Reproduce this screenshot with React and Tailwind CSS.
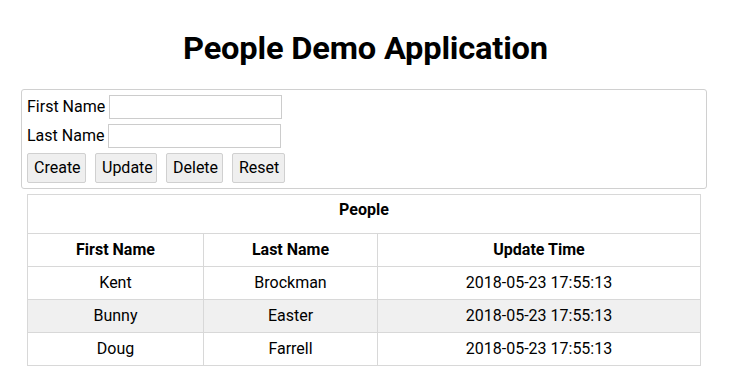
import React from 'react';

const people = [
  { first: 'Kent', last: 'Brockman', time: '2018-05-23 17:55:13' },
  { first: 'Bunny', last: 'Easter', time: '2018-05-23 17:55:13' },
  { first: 'Doug', last: 'Farrell', time: '2018-05-23 17:55:13' },
];

const Button = ({ children, className = '' }) => (
  <button
    className={`h-[30px] px-[6px] bg-[#efefef] border border-[#d0d0d0] rounded-[2px] text-[16px] text-black ${className}`}
  >
    {children}
  </button>
);

const App = () => (
  <div className="min-h-screen bg-white text-black" style={{ fontFamily: 'Roboto, "Liberation Sans", sans-serif' }}>
    <h1 className="pt-[28px] h-[89px] text-center text-[32px] font-bold leading-[40px] tracking-[-0.2px] scale-x-[1.02]">
      People Demo Application
    </h1>

    <div className="ml-[21px] w-[686px] h-[100px] border border-[#d0d0d0] rounded-[3px] px-[5px] pt-[5px] text-[16px]">
      <div className="flex items-center h-[24px]">
        <span className="mr-[4px]">First Name</span>
        <input className="w-[173px] h-[24px] border border-[#cccccc] outline-none" />
      </div>
      <div className="flex items-center h-[24px] mt-[5px]">
        <span className="mr-[4px]">Last Name</span>
        <input className="w-[173px] h-[24px] border border-[#cccccc] outline-none" />
      </div>
      <div className="flex items-center gap-[9px] mt-[5px]">
        <Button className="w-[59px]">Create</Button>
        <Button className="w-[62px]">Update</Button>
        <Button className="w-[57px]">Delete</Button>
        <Button className="w-[53px]">Reset</Button>
      </div>
    </div>

    <table className="ml-[27px] mt-[5px] w-[674px] border-collapse text-[16px]">
      <colgroup>
        <col className="w-[176px]" />
        <col className="w-[174px]" />
        <col />
      </colgroup>
      <thead>
        <tr className="h-[39px]">
          <th colSpan={3} className="border border-[#d8d8d8] font-bold align-top pt-[3px]">People</th>
        </tr>
        <tr className="h-[33px]">
          <th className="border border-[#d8d8d8] font-bold">First Name</th>
          <th className="border border-[#d8d8d8] font-bold">Last Name</th>
          <th className="border border-[#d8d8d8] font-bold">Update Time</th>
        </tr>
      </thead>
      <tbody>
        {people.map((p, i) => (
          <tr key={p.first} className={`h-[33px] ${i === 1 ? 'bg-[#f0f0f0]' : ''}`}>
            <td className="border border-[#d8d8d8] text-center">{p.first}</td>
            <td className="border border-[#d8d8d8] text-center">{p.last}</td>
            <td className="border border-[#d8d8d8] text-center">{p.time}</td>
          </tr>
        ))}
      </tbody>
    </table>
  </div>
);

export default App;
